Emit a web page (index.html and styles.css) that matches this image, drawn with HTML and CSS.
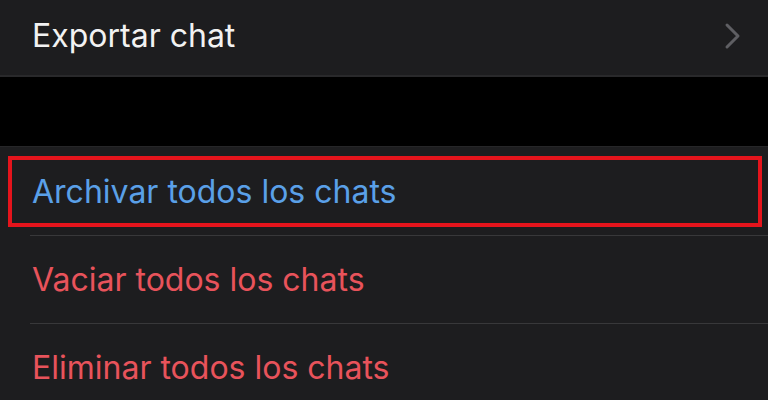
FILE: index.html
```html
<!DOCTYPE html>
<html lang="es">
<head>
<meta charset="utf-8">
<link rel="stylesheet" href="styles.css">
</head>
<body>
  <div class="group group-top">
    <div class="row row-top">
      <span class="label label-white">Exportar chat</span>
      <svg class="chevron" width="18" height="28" viewBox="0 0 18 28">
        <polyline points="3,3 14,14 3,25" fill="none" stroke="#5f5f63" stroke-width="3" stroke-linecap="round" stroke-linejoin="round"/>
      </svg>
    </div>
  </div>
  <div class="gap"></div>
  <div class="group group-actions">
    <div class="row highlighted">
      <span class="label label-blue">Archivar todos los chats</span>
      <div class="mark"></div>
    </div>
    <div class="row">
      <span class="label label-red">Vaciar todos los chats</span>
    </div>
    <div class="row">
      <span class="label label-red">Eliminar todos los chats</span>
    </div>
  </div>
</body>
</html>
```

FILE: styles.css
```css
html, body {
  margin: 0;
  padding: 0;
  background: #000;
  width: 768px;
  height: 400px;
  overflow: hidden;
}

body {
  font-family: Inter, "Open Sans", "Liberation Sans", sans-serif;
}

.group {
  background: #1d1d1f;
}

.group-top {
  border-bottom: 2px solid #29292b;
}

.row {
  position: relative;
  display: flex;
  align-items: center;
  height: 88px;
  padding-left: 32px;
  box-sizing: border-box;
}

.row-top {
  height: 75px;
  padding-bottom: 5px;
  padding-right: 26px;
  justify-content: space-between;
}

.chevron {
  display: block;
  margin-top: 2px;
}

.gap {
  height: 69px;
  background: #000;
}

.group-actions {
  border-top: 1px solid #262628;
}

.group-actions .row + .row::before {
  content: "";
  position: absolute;
  left: 30px;
  right: 0;
  top: 0;
  height: 1px;
  background: #38383a;
}

.label {
  font-size: 32px;
  font-weight: 400;
  letter-spacing: 0;
}

.label-white { color: #f2f2f2; }
.label-blue { color: #5aa0e8; }
.label-red { color: #e8535b; }

.mark {
  position: absolute;
  left: 8px;
  top: 9px;
  width: 754px;
  height: 71px;
  box-sizing: border-box;
  border: 4px solid #e5141c;
}
```
